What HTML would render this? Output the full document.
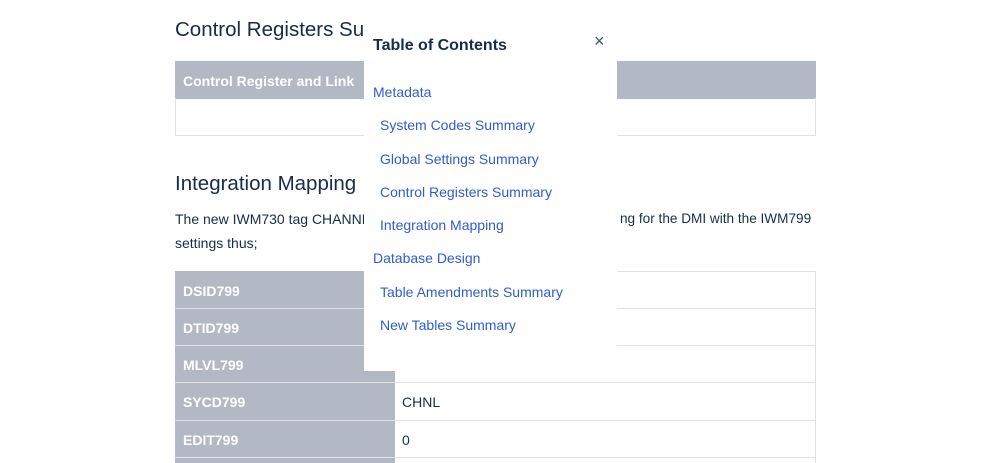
<!DOCTYPE html>
<html><head><style>
body{margin:0;width:998px;height:463px;overflow:hidden;background:#fff;font-family:"Liberation Sans",sans-serif;color:#172b4d;position:relative}
.a{position:absolute;white-space:nowrap}
h2{margin:0;font-size:20.5px;font-weight:normal}
.hd{background:#b3b9c4;color:#fff;font-weight:bold;font-size:14px}
.cell{position:absolute;box-sizing:border-box}
.toc{position:absolute;left:364px;top:0;width:253px;height:371px;background:#fff}
.toc a{position:absolute;color:#2f5ccf;font-size:14px;text-decoration:none;white-space:nowrap}
</style></head><body>
<h2 class="a" style="left:175px;top:18px">Control Registers Summary</h2>
<div class="cell hd" style="left:175px;top:61px;width:641px;height:38px;padding:12px 8px">Control Register and Link</div>
<div class="cell" style="left:175px;top:98px;width:641px;height:38px;border:1px solid #dfe1e6;border-top:none"></div>
<h2 class="a" style="left:175px;top:172px">Integration Mapping</h2>
<div class="a" style="left:175px;top:207px;font-size:14px;line-height:24px">The new IWM730 tag CHANNEL<br>settings thus;</div>
<div class="a" style="left:620px;top:207px;font-size:13.6px;line-height:24px">ng for the DMI with the IWM799</div>
<div class="cell" style="left:175px;top:271px;width:641px;height:192px;border:1px solid #dfe1e6;border-bottom:none"></div>
<div class="cell hd" style="left:175px;top:271px;width:220px;height:192px"></div>
<div class="cell" style="left:175px;top:308px;width:641px;border-top:1px solid #dfe1e6"></div>
<div class="cell" style="left:175px;top:345px;width:641px;border-top:1px solid #dfe1e6"></div>
<div class="cell" style="left:175px;top:382px;width:641px;border-top:1px solid #dfe1e6"></div>
<div class="cell" style="left:175px;top:420px;width:641px;border-top:1px solid #dfe1e6"></div>
<div class="cell" style="left:175px;top:457px;width:641px;border-top:1px solid #dfe1e6"></div>
<div class="a hd" style="left:183px;top:283px;background:none">DSID799</div>
<div class="a hd" style="left:183px;top:320px;background:none">DTID799</div>
<div class="a hd" style="left:183px;top:357px;background:none">MLVL799</div>
<div class="a hd" style="left:183px;top:394px;background:none">SYCD799</div>
<div class="a hd" style="left:183px;top:432px;background:none">EDIT799</div>
<div class="a" style="left:402px;top:394px;font-size:14px">CHNL</div>
<div class="a" style="left:402px;top:432px;font-size:14px">0</div>
<div class="toc">
<div class="a" style="left:9px;top:37px;font-size:16px;font-weight:bold;color:#172b4d">Table of Contents</div>
<div class="a" style="left:230px;top:31px;font-size:18px;color:#42526e">×</div>
<a style="left:9px;top:84px">Metadata</a>
<a style="left:16px;top:117px">System Codes Summary</a>
<a style="left:16px;top:151px">Global Settings Summary</a>
<a style="left:16px;top:184px">Control Registers Summary</a>
<a style="left:16px;top:217px">Integration Mapping</a>
<a style="left:9px;top:250px">Database Design</a>
<a style="left:16px;top:284px">Table Amendments Summary</a>
<a style="left:16px;top:317px">New Tables Summary</a>
</div>
</body></html>
